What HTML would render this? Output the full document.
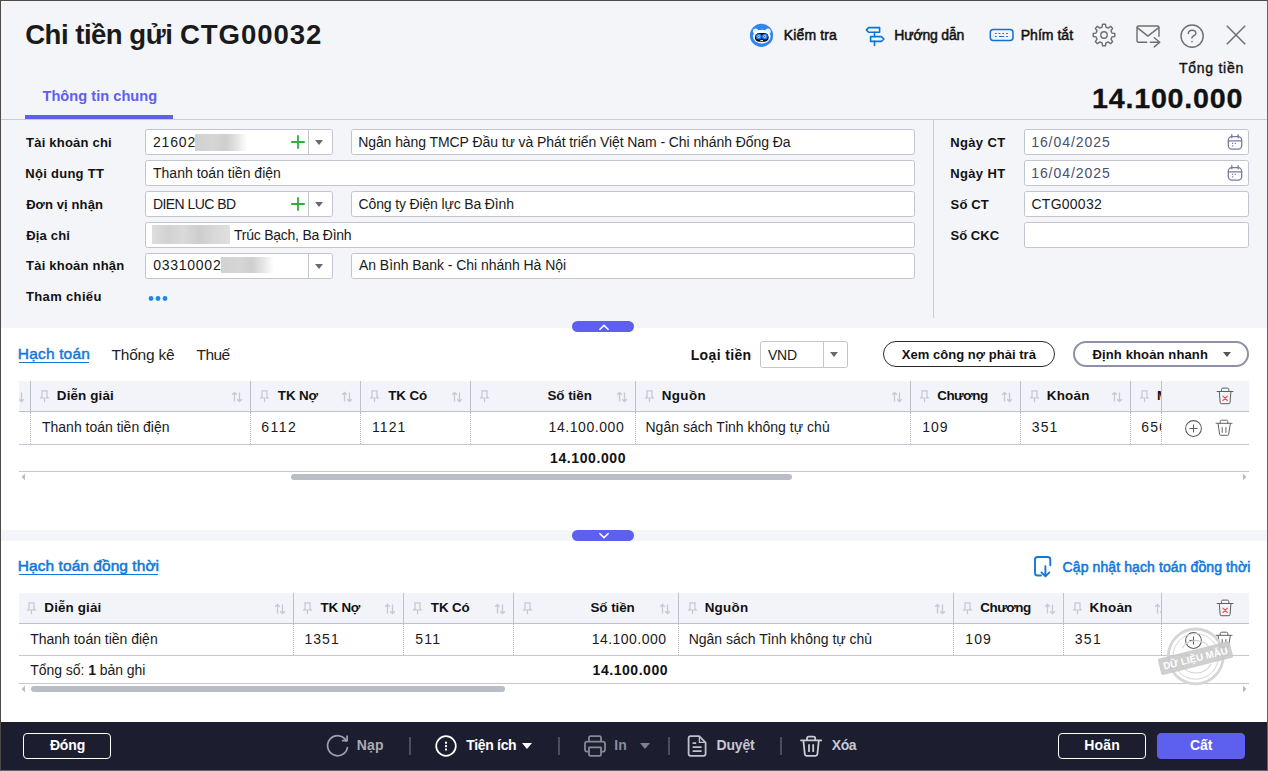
<!DOCTYPE html>
<html lang="vi">
<head>
<meta charset="utf-8">
<title>Chi tiền gửi CTG00032</title>
<style>
*{box-sizing:border-box;margin:0;padding:0}
html,body{width:1268px;height:771px;overflow:hidden}
body{position:relative;background:#f4f5f9;font-family:"Liberation Sans",sans-serif;font-size:14px;color:#111}
.a{position:absolute}
svg{position:absolute;overflow:visible}
.t{position:absolute;white-space:nowrap}
.frame{position:absolute;left:0;top:0;width:1268px;height:771px;border:1px solid;border-color:#4d4a48 #67635f #67635f #4d4a48;z-index:50}
.inp{position:absolute;border:1px solid #c2c5cf;border-radius:2.5px;background:#fff}
.sep{position:absolute;width:1px;background:#c4c7d0}
.arr{position:absolute;width:0;height:0;border-left:4.2px solid transparent;border-right:4.2px solid transparent;border-top:5.2px solid #6a6a6a}
.white{position:absolute;left:1px;width:1266px;background:#fff}
.pill{position:absolute;left:572px;width:62px;height:11px;border-radius:5.5px;background:#5d5fef}
.footer{position:absolute;left:1px;top:722px;width:1266px;height:48px;background:#1c1d2e}
.fbtn{position:absolute;top:733px;height:26px;border-radius:4px;border:1px solid #fff}
.fsep{position:absolute;top:737px;width:2px;height:18px;background:#4b4d60;margin-left:-1px}
.th{position:absolute;background:#f3f4f9}
.vs{position:absolute;width:1px;background:#bfc2cc}
.vd{position:absolute;width:0;border-left:1px dotted #b5b7c2}
.hl{position:absolute;height:1px;background:#c6c8d1}
</style>
</head>
<body>
<h1 style="font-size:inherit;font-weight:inherit">
<div class="t" style="left:25.20px;top:18px;font-size:27.6px;line-height:34px;color:#1a1a1a;font-weight:bold;letter-spacing:-0.52px;">Chi tiền gửi</div>
<div class="t" style="left:179.90px;top:18px;font-size:27.6px;line-height:34px;color:#1a1a1a;font-weight:bold;letter-spacing:0.93px;">CTG00032</div>
</h1>
<div class="t" style="left:42.45px;top:86px;font-size:14.6px;line-height:20px;color:#5d5fef;font-weight:bold;letter-spacing:0.03px;">Thông tin chung</div>
<div class="a" style="left:25px;top:115px;width:148px;height:4px;background:#5d5fef"></div>
<div class="a" style="left:1px;top:119px;width:1266px;height:1px;background:#c9ccd6"></div>
<svg style="left:749px;top:23px" width="25" height="25" viewBox="0 0 25 25"><circle cx="12.5" cy="12.4" r="11.6" fill="#3284ee"/><circle cx="6.6" cy="8.3" r="2.7" fill="#e8f1fd"/><circle cx="19" cy="8.3" r="2.7" fill="#e8f1fd"/><ellipse cx="12.75" cy="13.6" rx="8.8" ry="6.9" fill="#fff"/><rect x="5.9" y="10" width="13.8" height="8.8" rx="4.4" fill="#0a0a14"/><circle cx="9.8" cy="13.6" r="2.9" fill="#1a84f5"/><circle cx="15.8" cy="13.6" r="2.9" fill="#1a84f5"/><circle cx="9.8" cy="13.6" r="1.3" fill="#e8efff"/><circle cx="15.8" cy="13.6" r="1.3" fill="#e8efff"/><circle cx="9.8" cy="13.6" r="0.7" fill="#223"/><circle cx="15.8" cy="13.6" r="0.7" fill="#223"/><rect x="11.4" y="16.9" width="2.6" height="1" fill="#fff"/></svg>
<div class="t" style="left:783.78px;top:26px;font-size:14px;line-height:18px;color:#111;letter-spacing:0.13px;-webkit-text-stroke:0.5px #111;">Kiểm tra</div>
<svg style="left:864px;top:25px" width="22" height="22" viewBox="0 0 22 22" fill="none" stroke="#0b73d9" stroke-width="1.6" stroke-linejoin="round" stroke-linecap="round"><path d="M2.4 4.9L4.6 2.6H15.6V7.3H4.6Z"/><path d="M10.5 7.3V11.5M10.5 16.4V20.5"/><path d="M6.6 11.6H17.4L19.9 14L17.4 16.4H6.6Z"/></svg>
<div class="t" style="left:894.28px;top:26px;font-size:14px;line-height:18px;color:#111;letter-spacing:-0.17px;-webkit-text-stroke:0.5px #111;">Hướng dẫn</div>
<svg style="left:988px;top:27px" width="28" height="16" viewBox="0 0 28 16" fill="none" stroke="#0b73d9"><rect x="2.3" y="2.5" width="22.7" height="11" rx="3" stroke-width="1.5"/><path d="M6.9 6.5h1.8M10.6 6.5h1.8M14.3 6.5h1.8M18.1 6.5h1.8M6.9 9.5h1.8M11 9.5h5.2M18.1 9.5h1.8" stroke-width="1"/></svg>
<div class="t" style="left:1020.68px;top:26px;font-size:14px;line-height:18px;color:#111;letter-spacing:0.04px;-webkit-text-stroke:0.5px #111;">Phím tắt</div>
<svg style="left:1092px;top:23px" width="24" height="24" viewBox="0 0 24 24" fill="none" stroke="#6e6e6e" stroke-width="1.4" stroke-linejoin="round"><path d="M10.09 4.03 L10.55 1.20 L13.45 1.20 L13.91 4.03 L16.28 5.01 L18.61 3.34 L20.66 5.39 L18.99 7.72 L19.97 10.09 L22.80 10.55 L22.80 13.45 L19.97 13.91 L18.99 16.28 L20.66 18.61 L18.61 20.66 L16.28 18.99 L13.91 19.97 L13.45 22.80 L10.55 22.80 L10.09 19.97 L7.72 18.99 L5.39 20.66 L3.34 18.61 L5.01 16.28 L4.03 13.91 L1.20 13.45 L1.20 10.55 L4.03 10.09 L5.01 7.72 L3.34 5.39 L5.39 3.34 L7.72 5.01Z"/><circle cx="12" cy="12" r="3.2"/></svg>
<svg style="left:1134px;top:23px" width="28" height="26" viewBox="0 0 28 26" fill="none" stroke="#6e6e6e" stroke-width="1.4" stroke-linecap="round" stroke-linejoin="round"><path d="M12.8 19.3H4.5Q3 19.3 3 17.8V4.5Q3 3 4.5 3H23.5Q25 3 25 4.5V13.3"/><path d="M3.3 4.6L13.9 13.1L24.7 4.6"/><path d="M16.4 19.3H25.6M20.3 14.7L25.8 19.3L20.3 23.9"/></svg>
<svg style="left:1180px;top:24px" width="24" height="24" viewBox="0 0 24 24" fill="none" stroke="#6e6e6e" stroke-width="1.4" stroke-linecap="round"><circle cx="12.1" cy="12.1" r="11.1"/><path d="M8.3 9.6C8.3 7.4 9.9 6.3 12 6.3C14.2 6.3 15.9 7.5 15.9 9.4C15.9 11.8 12 11.6 11.9 14"/><circle cx="12" cy="17.6" r="0.8" fill="#6e6e6e" stroke="none"/></svg>
<svg style="left:1224px;top:23px" width="24" height="24" viewBox="0 0 24 24" fill="none" stroke="#6e6e6e" stroke-width="1.5"><path d="M2.8 2.8L21.2 21.2M21.2 2.8L2.8 21.2"/></svg>
<div class="t" style="left:1179.12px;top:59px;font-size:14px;line-height:18px;color:#111;letter-spacing:0.71px;-webkit-text-stroke:0.35px #111;">Tổng tiền</div>
<div class="t" style="left:1092.18px;top:82px;font-size:26.8px;line-height:34px;color:#111;font-weight:bold;letter-spacing:0.72px;-webkit-text-stroke:0.3px #111;transform:scaleX(1.07);transform-origin:0 0;">14.100.000</div>
<div class="t" style="left:26.07px;top:134px;font-size:13px;line-height:18px;color:#111;font-weight:bold;letter-spacing:0.21px;">Tài khoản chi</div>
<div class="t" style="left:25.36px;top:165px;font-size:13px;line-height:18px;color:#111;font-weight:bold;letter-spacing:0.27px;">Nội dung TT</div>
<div class="t" style="left:26.13px;top:196px;font-size:13px;line-height:18px;color:#111;font-weight:bold;letter-spacing:0.11px;">Đơn vị nhận</div>
<div class="t" style="left:26.13px;top:227px;font-size:13px;line-height:18px;color:#111;font-weight:bold;letter-spacing:0.19px;">Địa chỉ</div>
<div class="t" style="left:26.07px;top:257px;font-size:13px;line-height:18px;color:#111;font-weight:bold;letter-spacing:0.22px;">Tài khoản nhận</div>
<div class="t" style="left:26.07px;top:288px;font-size:13px;line-height:18px;color:#111;font-weight:bold;letter-spacing:0.34px;">Tham chiếu</div>
<div class="inp" style="left:145px;top:129px;width:188px;height:26px"></div>
<div class="sep" style="left:308px;top:130px;height:24px"></div>
<div class="arr" style="left:315.3px;top:140px"></div>
<svg style="left:289.7px;top:134px" width="16" height="16" viewBox="0 0 16 16"><path d="M8 1.2v13.6M1.2 8h13.6" stroke="#2eae3c" stroke-width="1.8" fill="none"/></svg>
<div class="inp" style="left:351px;top:129px;width:564px;height:26px"></div>
<div class="inp" style="left:145px;top:160px;width:770px;height:26px"></div>
<div class="inp" style="left:145px;top:191px;width:188px;height:26px"></div>
<div class="sep" style="left:308px;top:192px;height:24px"></div>
<div class="arr" style="left:315.3px;top:202px"></div>
<svg style="left:289.7px;top:196px" width="16" height="16" viewBox="0 0 16 16"><path d="M8 1.2v13.6M1.2 8h13.6" stroke="#2eae3c" stroke-width="1.8" fill="none"/></svg>
<div class="inp" style="left:351px;top:191px;width:564px;height:26px"></div>
<div class="inp" style="left:145px;top:222px;width:770px;height:26px"></div>
<div class="inp" style="left:145px;top:253px;width:188px;height:26px"></div>
<div class="sep" style="left:308px;top:254px;height:24px"></div>
<div class="arr" style="left:315.3px;top:264px"></div>
<div class="inp" style="left:351px;top:253px;width:564px;height:26px"></div>
<div class="t" style="left:153.00px;top:133px;font-size:14px;line-height:18px;color:#1a1a1a;letter-spacing:0.82px;">21602</div>
<div class="t" style="left:358.18px;top:133px;font-size:14px;line-height:18px;color:#1a1a1a;letter-spacing:-0.08px;">Ngân hàng TMCP Đầu tư và Phát triển Việt Nam - Chi nhánh Đống Đa</div>
<div class="t" style="left:153.02px;top:164px;font-size:14px;line-height:18px;color:#1a1a1a;letter-spacing:0.01px;">Thanh toán tiền điện</div>
<div class="t" style="left:152.88px;top:195px;font-size:14px;line-height:18px;color:#1a1a1a;letter-spacing:-0.54px;">DIEN LUC BD</div>
<div class="t" style="left:358.60px;top:195px;font-size:14px;line-height:18px;color:#1a1a1a;letter-spacing:-0.15px;">Công ty Điện lực Ba Đình</div>
<div class="t" style="left:233.92px;top:226px;font-size:14px;line-height:18px;color:#1a1a1a;letter-spacing:-0.23px;">Trúc Bạch, Ba Đình</div>
<div class="t" style="left:153.14px;top:256px;font-size:14px;line-height:18px;color:#1a1a1a;letter-spacing:0.75px;">03310002</div>
<div class="t" style="left:359.00px;top:256px;font-size:14px;line-height:18px;color:#1a1a1a;letter-spacing:-0.05px;">An Bình Bank - Chi nhánh Hà Nội</div>
<div class="a" style="left:195px;top:134px;width:52px;height:17px;background:linear-gradient(90deg,#d0d0d0 0,#d6d6d6 35%,#cfcfcf 60%,#e6e6e6 82%,#fff 100%)"></div>
<div class="a" style="left:152px;top:225px;width:78px;height:18.5px;background:linear-gradient(90deg,#dedede 0,#d2d2d2 20%,#dadada 40%,#cdcdcd 60%,#d8d8d8 80%,#e0e0e0 100%)"></div>
<div class="a" style="left:220.5px;top:256.5px;width:53px;height:16px;background:linear-gradient(90deg,#d2d2d2 0,#d6d6d6 35%,#cfcfcf 58%,#e6e6e6 80%,#fff 100%)"></div>
<svg style="left:148px;top:295px" width="20" height="7" viewBox="0 0 20 7"><circle cx="3" cy="3.5" r="2.4" fill="#1e88e5"/><circle cx="10" cy="3.5" r="2.4" fill="#1e88e5"/><circle cx="17" cy="3.5" r="2.4" fill="#1e88e5"/></svg>
<div class="a" style="left:933px;top:120px;width:1px;height:198px;background:#c9ccd6"></div>
<div class="t" style="left:950.15px;top:134px;font-size:13px;line-height:18px;color:#111;font-weight:bold;letter-spacing:0.38px;">Ngày CT</div>
<div class="t" style="left:950.15px;top:165px;font-size:13px;line-height:18px;color:#111;font-weight:bold;letter-spacing:0.38px;">Ngày HT</div>
<div class="t" style="left:950.61px;top:196px;font-size:13px;line-height:18px;color:#111;font-weight:bold;letter-spacing:0.11px;">Số CT</div>
<div class="t" style="left:950.61px;top:227px;font-size:13px;line-height:18px;color:#111;font-weight:bold;letter-spacing:0.01px;">Số CKC</div>
<div class="inp" style="left:1024px;top:129px;width:225px;height:26px"></div>
<div class="inp" style="left:1024px;top:160px;width:225px;height:26px"></div>
<div class="inp" style="left:1024px;top:191px;width:225px;height:26px"></div>
<div class="inp" style="left:1024px;top:222px;width:225px;height:26px"></div>
<div class="t" style="left:1031.15px;top:133px;font-size:14px;line-height:18px;color:#4a4e70;letter-spacing:0.95px;">16/04/2025</div>
<div class="t" style="left:1031.15px;top:164px;font-size:14px;line-height:18px;color:#4a4e70;letter-spacing:0.95px;">16/04/2025</div>
<div class="t" style="left:1031.50px;top:195px;font-size:14px;line-height:18px;color:#1a1a1a;letter-spacing:0.25px;">CTG00032</div>
<svg style="left:1227px;top:134px" width="16" height="16" viewBox="0 0 16 16" fill="none" stroke="#777b9f" stroke-width="1.3" stroke-linecap="round"><rect x="1.3" y="2.6" width="13.4" height="12.6" rx="3.6"/><path d="M1.5 6.8h13M4.8 0.6v3.2M11.2 0.6v3.2"/><path d="M5 9.4h1.2M7.7 9.4h1.2M5 11.9h1.2" stroke-linecap="butt"/></svg>
<svg style="left:1227px;top:165px" width="16" height="16" viewBox="0 0 16 16" fill="none" stroke="#777b9f" stroke-width="1.3" stroke-linecap="round"><rect x="1.3" y="2.6" width="13.4" height="12.6" rx="3.6"/><path d="M1.5 6.8h13M4.8 0.6v3.2M11.2 0.6v3.2"/><path d="M5 9.4h1.2M7.7 9.4h1.2M5 11.9h1.2" stroke-linecap="butt"/></svg>
<div class="white" style="top:328px;height:202px"></div>
<div class="white" style="top:541px;height:181px"></div>
<div class="pill" style="top:321px"></div><svg style="left:598px;top:322.6px" width="12" height="9" viewBox="0 0 12 9"><path d="M1.4 6.8L6 2.4L10.6 6.8" fill="none" stroke="#fff" stroke-width="1.5"/></svg>
<div class="pill" style="top:530px"></div><svg style="left:598px;top:531px" width="12" height="9" viewBox="0 0 12 9"><path d="M1.4 2.2L6 6.6L10.6 2.2" fill="none" stroke="#fff" stroke-width="1.5"/></svg>
<div class="t" style="left:17.86px;top:344px;font-size:15.5px;line-height:20px;color:#1278da;letter-spacing:0.16px;-webkit-text-stroke:0.45px #1278da;">Hạch toán</div>
<div class="a" style="left:19px;top:362px;width:70px;height:1px;background:#1278da"></div>
<div class="t" style="left:111.49px;top:345px;font-size:15.5px;line-height:20px;color:#222;letter-spacing:-0.20px;">Thống kê</div>
<div class="t" style="left:196.49px;top:345px;font-size:15.5px;line-height:20px;color:#222;letter-spacing:-0.53px;">Thuế</div>
<div class="t" style="left:690.69px;top:346px;font-size:14px;line-height:18px;color:#111;font-weight:bold;letter-spacing:0.36px;">Loại tiền</div>
<div class="inp" style="left:760px;top:341px;width:88px;height:27px"></div>
<div class="sep" style="left:823px;top:342px;height:25px"></div>
<div class="arr" style="left:830.3px;top:352px"></div>
<div class="t" style="left:767.93px;top:346px;font-size:14px;line-height:18px;color:#1a1a1a;letter-spacing:-0.17px;">VND</div>
<div class="a" style="left:883px;top:341px;width:172px;height:26px;border:1px solid #2a2a2a;border-radius:13px;background:#fff"></div>
<div class="t" style="left:901.87px;top:346px;font-size:13px;line-height:18px;color:#111;font-weight:bold;letter-spacing:0.03px;">Xem công nợ phải trả</div>
<div class="a" style="left:1073px;top:341px;width:176px;height:26px;border:2px solid #8d91a8;border-radius:13px;background:#fff"></div>
<div class="t" style="left:1092.53px;top:346px;font-size:13px;line-height:18px;color:#111;font-weight:bold;letter-spacing:0.13px;">Định khoản nhanh</div>
<div class="arr" style="left:1222.6px;top:352px;border-top-color:#555;border-left-width:4.8px;border-right-width:4.8px;border-top-width:5.6px"></div>
<div class="th" style="left:19px;top:381px;width:1230px;height:30px"></div>
<div class="hl" style="left:19px;top:411px;width:1230px;background:#bfc2cc"></div>
<div class="hl" style="left:19px;top:444px;width:1230px"></div>
<div class="vs" style="left:30px;top:381px;height:30px"></div>
<div class="vd" style="left:30px;top:412px;height:32px"></div>
<svg style="left:39.8px;top:390px" width="9" height="13" viewBox="0 0 9 13" fill="none" stroke="#c4c7cf" stroke-width="1.2"><path d="M2 0.8h5v5.9l1.2 1.3H0.8l1.2-1.3zM4.5 8v4.3"/></svg>
<div class="t" style="left:56.83px;top:387px;font-size:13.4px;line-height:18px;color:#111;font-weight:bold;letter-spacing:0.13px;">Diễn giải</div>
<div class="t" style="left:42.02px;top:418px;font-size:14px;line-height:18px;color:#1a1a1a;letter-spacing:-0.01px;">Thanh toán tiền điện</div>
<svg style="left:230.5px;top:391px" width="12" height="12" viewBox="0 0 12 12" fill="none" stroke="#c6c9d1" stroke-width="1.3"><path d="M3.5 10.5v-9M1.2 3.8L3.5 1.5L5.8 3.8M8.5 1.5v9M6.2 8.2L8.5 10.5L10.8 8.2"/></svg>
<div class="vs" style="left:250px;top:381px;height:30px"></div>
<div class="vd" style="left:250px;top:412px;height:32px"></div>
<svg style="left:259.8px;top:390px" width="9" height="13" viewBox="0 0 9 13" fill="none" stroke="#c4c7cf" stroke-width="1.2"><path d="M2 0.8h5v5.9l1.2 1.3H0.8l1.2-1.3zM4.5 8v4.3"/></svg>
<div class="t" style="left:277.87px;top:387px;font-size:13.4px;line-height:18px;color:#111;font-weight:bold;letter-spacing:-0.12px;">TK Nợ</div>
<div class="t" style="left:261.30px;top:418px;font-size:14px;line-height:18px;color:#1a1a1a;letter-spacing:1.50px;">6112</div>
<svg style="left:340.5px;top:391px" width="12" height="12" viewBox="0 0 12 12" fill="none" stroke="#c6c9d1" stroke-width="1.3"><path d="M3.5 10.5v-9M1.2 3.8L3.5 1.5L5.8 3.8M8.5 1.5v9M6.2 8.2L8.5 10.5L10.8 8.2"/></svg>
<div class="vs" style="left:360px;top:381px;height:30px"></div>
<div class="vd" style="left:360px;top:412px;height:32px"></div>
<svg style="left:369.8px;top:390px" width="9" height="13" viewBox="0 0 9 13" fill="none" stroke="#c4c7cf" stroke-width="1.2"><path d="M2 0.8h5v5.9l1.2 1.3H0.8l1.2-1.3zM4.5 8v4.3"/></svg>
<div class="t" style="left:388.17px;top:387px;font-size:13.4px;line-height:18px;color:#111;font-weight:bold;letter-spacing:-0.07px;">TK Có</div>
<div class="t" style="left:371.95px;top:418px;font-size:14px;line-height:18px;color:#1a1a1a;letter-spacing:1.09px;">1121</div>
<svg style="left:450.5px;top:391px" width="12" height="12" viewBox="0 0 12 12" fill="none" stroke="#c6c9d1" stroke-width="1.3"><path d="M3.5 10.5v-9M1.2 3.8L3.5 1.5L5.8 3.8M8.5 1.5v9M6.2 8.2L8.5 10.5L10.8 8.2"/></svg>
<div class="vs" style="left:470px;top:381px;height:30px"></div>
<div class="vd" style="left:470px;top:412px;height:32px"></div>
<svg style="left:479.8px;top:390px" width="9" height="13" viewBox="0 0 9 13" fill="none" stroke="#c4c7cf" stroke-width="1.2"><path d="M2 0.8h5v5.9l1.2 1.3H0.8l1.2-1.3zM4.5 8v4.3"/></svg>
<div class="t" style="left:547.40px;top:387px;font-size:13.4px;line-height:18px;color:#111;font-weight:bold;letter-spacing:-0.03px;">Số tiền</div>
<div class="t" style="left:548.55px;top:418px;font-size:14px;line-height:18px;color:#1a1a1a;letter-spacing:0.57px;">14.100.000</div>
<svg style="left:615.5px;top:391px" width="12" height="12" viewBox="0 0 12 12" fill="none" stroke="#c6c9d1" stroke-width="1.3"><path d="M3.5 10.5v-9M1.2 3.8L3.5 1.5L5.8 3.8M8.5 1.5v9M6.2 8.2L8.5 10.5L10.8 8.2"/></svg>
<div class="vs" style="left:635px;top:381px;height:30px"></div>
<div class="vd" style="left:635px;top:412px;height:32px"></div>
<svg style="left:644.8px;top:390px" width="9" height="13" viewBox="0 0 9 13" fill="none" stroke="#c4c7cf" stroke-width="1.2"><path d="M2 0.8h5v5.9l1.2 1.3H0.8l1.2-1.3zM4.5 8v4.3"/></svg>
<div class="t" style="left:661.83px;top:387px;font-size:13.4px;line-height:18px;color:#111;font-weight:bold;letter-spacing:0.34px;">Nguồn</div>
<div class="t" style="left:645.48px;top:418px;font-size:14px;line-height:18px;color:#1a1a1a;letter-spacing:0.03px;">Ngân sách Tỉnh không tự chủ</div>
<svg style="left:890.5px;top:391px" width="12" height="12" viewBox="0 0 12 12" fill="none" stroke="#c6c9d1" stroke-width="1.3"><path d="M3.5 10.5v-9M1.2 3.8L3.5 1.5L5.8 3.8M8.5 1.5v9M6.2 8.2L8.5 10.5L10.8 8.2"/></svg>
<div class="vs" style="left:910px;top:381px;height:30px"></div>
<div class="vd" style="left:910px;top:412px;height:32px"></div>
<svg style="left:919.8px;top:390px" width="9" height="13" viewBox="0 0 9 13" fill="none" stroke="#c4c7cf" stroke-width="1.2"><path d="M2 0.8h5v5.9l1.2 1.3H0.8l1.2-1.3zM4.5 8v4.3"/></svg>
<div class="t" style="left:937.26px;top:387px;font-size:13.4px;line-height:18px;color:#111;font-weight:bold;letter-spacing:-0.49px;">Chương</div>
<div class="t" style="left:922.15px;top:418px;font-size:14px;line-height:18px;color:#1a1a1a;letter-spacing:1.08px;">109</div>
<svg style="left:1000.5px;top:391px" width="12" height="12" viewBox="0 0 12 12" fill="none" stroke="#c6c9d1" stroke-width="1.3"><path d="M3.5 10.5v-9M1.2 3.8L3.5 1.5L5.8 3.8M8.5 1.5v9M6.2 8.2L8.5 10.5L10.8 8.2"/></svg>
<div class="vs" style="left:1020px;top:381px;height:30px"></div>
<div class="vd" style="left:1020px;top:412px;height:32px"></div>
<svg style="left:1029.8px;top:390px" width="9" height="13" viewBox="0 0 9 13" fill="none" stroke="#c4c7cf" stroke-width="1.2"><path d="M2 0.8h5v5.9l1.2 1.3H0.8l1.2-1.3zM4.5 8v4.3"/></svg>
<div class="t" style="left:1046.73px;top:387px;font-size:13.4px;line-height:18px;color:#111;font-weight:bold;letter-spacing:0.25px;">Khoản</div>
<div class="t" style="left:1031.74px;top:418px;font-size:14px;line-height:18px;color:#1a1a1a;letter-spacing:1.14px;">351</div>
<svg style="left:1110.5px;top:391px" width="12" height="12" viewBox="0 0 12 12" fill="none" stroke="#c6c9d1" stroke-width="1.3"><path d="M3.5 10.5v-9M1.2 3.8L3.5 1.5L5.8 3.8M8.5 1.5v9M6.2 8.2L8.5 10.5L10.8 8.2"/></svg>
<div class="vs" style="left:1130px;top:381px;height:30px"></div>
<div class="vd" style="left:1130px;top:412px;height:32px"></div>
<svg style="left:1139.8px;top:390px" width="9" height="13" viewBox="0 0 9 13" fill="none" stroke="#c4c7cf" stroke-width="1.2"><path d="M2 0.8h5v5.9l1.2 1.3H0.8l1.2-1.3zM4.5 8v4.3"/></svg>
<div class="a" style="left:1131px;top:381px;width:30px;height:63px;overflow:hidden">
<div class="t" style="left:26.03px;top:6px;font-size:13.4px;line-height:18px;color:#111;font-weight:bold;">Mục</div>
<div class="t" style="left:10.20px;top:37px;font-size:14px;line-height:18px;color:#1a1a1a;letter-spacing:1.26px;">6501</div>
</div>
<div class="vs" style="left:1161px;top:381px;height:30px"></div>
<div class="vd" style="left:1161px;top:412px;height:32px"></div>
<div class="a" style="left:19px;top:381px;width:11px;height:30px;overflow:hidden"><svg style="left:-6.5px;top:10px" width="12" height="12" viewBox="0 0 12 12" fill="none" stroke="#c6c9d1" stroke-width="1.3"><path d="M3.5 10.5v-9M1.2 3.8L3.5 1.5L5.8 3.8M8.5 1.5v9M6.2 8.2L8.5 10.5L10.8 8.2"/></svg></div>
<div class="hl" style="left:19px;top:471px;width:1230px"></div>
<svg style="left:1216px;top:387px" width="18" height="18" viewBox="0 0 18 18" fill="none" stroke="#606060" stroke-width="1" stroke-linecap="round" stroke-linejoin="round"><path d="M1.1 4.5H17M5.5 4.4V2.5Q5.5 1.1 6.9 1.1H11.4Q12.8 1.1 12.8 2.5V4.4M3.3 5L4.2 15.8Q4.3 16.7 5.2 16.7H13Q13.9 16.7 14 15.8L14.9 5"/><path d="M6.9 9.1L11.3 13.5M11.3 9.1L6.9 13.5" stroke="#fb4a54" stroke-width="1.1"/></svg>
<svg style="left:1183.8px;top:418.5px" width="19" height="19" viewBox="0 0 19 19" fill="none" stroke="#5e5e5e" stroke-width="1.05"><circle cx="9.5" cy="9.5" r="7.9"/><path d="M9.5 5.4V13.6M5.4 9.5H13.6"/></svg>
<svg style="left:1215px;top:419px" width="18" height="18" viewBox="0 0 18 18" fill="none" stroke="#636363" stroke-width="1" stroke-linecap="round" stroke-linejoin="round"><path d="M1.1 4.3H17M5.2 4.2V2.6Q5.2 1.2 6.6 1.2H11.4Q12.8 1.2 12.8 2.6V4.2M3.1 4.8L4.6 15.4Q4.7 16.3 5.6 16.3H12.6Q13.5 16.3 13.6 15.4L15.3 4.8M7.2 8.5V13.4M10.9 8.5V13.4"/></svg>
<div class="t" style="left:550.06px;top:449px;font-size:14px;line-height:18px;color:#111;font-weight:bold;letter-spacing:0.59px;">14.100.000</div>
<div class="a" style="left:291px;top:474px;width:501px;height:6px;border-radius:3px;background:#b9bdc6"></div>
<svg style="left:20px;top:473px" width="6" height="8" viewBox="0 0 6 8"><path d="M5 0.5L1.5 4L5 7.5z" fill="#b9bdc6"/></svg>
<svg style="left:1242px;top:473px" width="6" height="8" viewBox="0 0 6 8"><path d="M1 0.5L4.5 4L1 7.5z" fill="#b9bdc6"/></svg>
<div class="t" style="left:17.86px;top:556px;font-size:15.5px;line-height:20px;color:#1278da;letter-spacing:0.05px;-webkit-text-stroke:0.55px #1278da;">Hạch toán đồng thời</div>
<div class="a" style="left:19px;top:574px;width:139px;height:1px;background:#1278da"></div>
<svg style="left:1033.2px;top:555px" width="22" height="24" viewBox="0 0 22 24" fill="none" stroke="#1278da" stroke-width="1.9" stroke-linecap="round" stroke-linejoin="round"><path d="M8 20.5H4.6Q2 20.5 2 17.9V4.6Q2 2 4.6 2H14.7Q17.3 2 17.3 4.6V10.3"/><path d="M12.4 11.2V21M8.4 17.4L12.4 21.4L16.4 17.4"/></svg>
<div class="t" style="left:1062.60px;top:558px;font-size:14px;line-height:18px;color:#1278da;letter-spacing:0.10px;-webkit-text-stroke:0.55px #1278da;">Cập nhật hạch toán đồng thời</div>
<div class="th" style="left:19px;top:593px;width:1230px;height:30px"></div>
<div class="hl" style="left:19px;top:623px;width:1230px;background:#bfc2cc"></div>
<div class="hl" style="left:19px;top:655px;width:1230px"></div>
<svg style="left:26.5px;top:602px" width="9" height="13" viewBox="0 0 9 13" fill="none" stroke="#c4c7cf" stroke-width="1.2"><path d="M2 0.8h5v5.9l1.2 1.3H0.8l1.2-1.3zM4.5 8v4.3"/></svg>
<div class="t" style="left:44.33px;top:599px;font-size:13.4px;line-height:18px;color:#111;font-weight:bold;letter-spacing:0.13px;">Diễn giải</div>
<div class="t" style="left:30.22px;top:630px;font-size:14px;line-height:18px;color:#1a1a1a;letter-spacing:-0.01px;">Thanh toán tiền điện</div>
<svg style="left:273.5px;top:603px" width="12" height="12" viewBox="0 0 12 12" fill="none" stroke="#c6c9d1" stroke-width="1.3"><path d="M3.5 10.5v-9M1.2 3.8L3.5 1.5L5.8 3.8M8.5 1.5v9M6.2 8.2L8.5 10.5L10.8 8.2"/></svg>
<div class="vs" style="left:293px;top:593px;height:30px"></div>
<div class="vd" style="left:293px;top:624px;height:31px"></div>
<svg style="left:302.8px;top:602px" width="9" height="13" viewBox="0 0 9 13" fill="none" stroke="#c4c7cf" stroke-width="1.2"><path d="M2 0.8h5v5.9l1.2 1.3H0.8l1.2-1.3zM4.5 8v4.3"/></svg>
<div class="t" style="left:320.47px;top:599px;font-size:13.4px;line-height:18px;color:#111;font-weight:bold;letter-spacing:-0.22px;">TK Nợ</div>
<div class="t" style="left:304.45px;top:630px;font-size:14px;line-height:18px;color:#1a1a1a;letter-spacing:1.04px;">1351</div>
<svg style="left:383.5px;top:603px" width="12" height="12" viewBox="0 0 12 12" fill="none" stroke="#c6c9d1" stroke-width="1.3"><path d="M3.5 10.5v-9M1.2 3.8L3.5 1.5L5.8 3.8M8.5 1.5v9M6.2 8.2L8.5 10.5L10.8 8.2"/></svg>
<div class="vs" style="left:403px;top:593px;height:30px"></div>
<div class="vd" style="left:403px;top:624px;height:31px"></div>
<svg style="left:412.8px;top:602px" width="9" height="13" viewBox="0 0 9 13" fill="none" stroke="#c4c7cf" stroke-width="1.2"><path d="M2 0.8h5v5.9l1.2 1.3H0.8l1.2-1.3zM4.5 8v4.3"/></svg>
<div class="t" style="left:430.87px;top:599px;font-size:13.4px;line-height:18px;color:#111;font-weight:bold;letter-spacing:-0.12px;">TK Có</div>
<div class="t" style="left:415.24px;top:630px;font-size:14px;line-height:18px;color:#1a1a1a;letter-spacing:1.18px;">511</div>
<svg style="left:493.5px;top:603px" width="12" height="12" viewBox="0 0 12 12" fill="none" stroke="#c6c9d1" stroke-width="1.3"><path d="M3.5 10.5v-9M1.2 3.8L3.5 1.5L5.8 3.8M8.5 1.5v9M6.2 8.2L8.5 10.5L10.8 8.2"/></svg>
<div class="vs" style="left:513px;top:593px;height:30px"></div>
<div class="vd" style="left:513px;top:624px;height:31px"></div>
<svg style="left:522.8px;top:602px" width="9" height="13" viewBox="0 0 9 13" fill="none" stroke="#c4c7cf" stroke-width="1.2"><path d="M2 0.8h5v5.9l1.2 1.3H0.8l1.2-1.3zM4.5 8v4.3"/></svg>
<div class="t" style="left:590.50px;top:599px;font-size:13.4px;line-height:18px;color:#111;font-weight:bold;letter-spacing:-0.06px;">Số tiền</div>
<div class="t" style="left:591.75px;top:630px;font-size:14px;line-height:18px;color:#1a1a1a;letter-spacing:0.46px;">14.100.000</div>
<svg style="left:658.5px;top:603px" width="12" height="12" viewBox="0 0 12 12" fill="none" stroke="#c6c9d1" stroke-width="1.3"><path d="M3.5 10.5v-9M1.2 3.8L3.5 1.5L5.8 3.8M8.5 1.5v9M6.2 8.2L8.5 10.5L10.8 8.2"/></svg>
<div class="vs" style="left:678px;top:593px;height:30px"></div>
<div class="vd" style="left:678px;top:624px;height:31px"></div>
<svg style="left:687.8px;top:602px" width="9" height="13" viewBox="0 0 9 13" fill="none" stroke="#c4c7cf" stroke-width="1.2"><path d="M2 0.8h5v5.9l1.2 1.3H0.8l1.2-1.3zM4.5 8v4.3"/></svg>
<div class="t" style="left:704.63px;top:599px;font-size:13.4px;line-height:18px;color:#111;font-weight:bold;letter-spacing:0.27px;">Nguồn</div>
<div class="t" style="left:688.68px;top:630px;font-size:14px;line-height:18px;color:#1a1a1a;">Ngân sách Tỉnh không tự chủ</div>
<svg style="left:933.5px;top:603px" width="12" height="12" viewBox="0 0 12 12" fill="none" stroke="#c6c9d1" stroke-width="1.3"><path d="M3.5 10.5v-9M1.2 3.8L3.5 1.5L5.8 3.8M8.5 1.5v9M6.2 8.2L8.5 10.5L10.8 8.2"/></svg>
<div class="vs" style="left:953px;top:593px;height:30px"></div>
<div class="vd" style="left:953px;top:624px;height:31px"></div>
<svg style="left:962.8px;top:602px" width="9" height="13" viewBox="0 0 9 13" fill="none" stroke="#c4c7cf" stroke-width="1.2"><path d="M2 0.8h5v5.9l1.2 1.3H0.8l1.2-1.3zM4.5 8v4.3"/></svg>
<div class="t" style="left:980.36px;top:599px;font-size:13.4px;line-height:18px;color:#111;font-weight:bold;letter-spacing:-0.53px;">Chương</div>
<div class="t" style="left:965.25px;top:630px;font-size:14px;line-height:18px;color:#1a1a1a;letter-spacing:1.14px;">109</div>
<svg style="left:1043.5px;top:603px" width="12" height="12" viewBox="0 0 12 12" fill="none" stroke="#c6c9d1" stroke-width="1.3"><path d="M3.5 10.5v-9M1.2 3.8L3.5 1.5L5.8 3.8M8.5 1.5v9M6.2 8.2L8.5 10.5L10.8 8.2"/></svg>
<div class="vs" style="left:1063px;top:593px;height:30px"></div>
<div class="vd" style="left:1063px;top:624px;height:31px"></div>
<svg style="left:1072.8px;top:602px" width="9" height="13" viewBox="0 0 9 13" fill="none" stroke="#c4c7cf" stroke-width="1.2"><path d="M2 0.8h5v5.9l1.2 1.3H0.8l1.2-1.3zM4.5 8v4.3"/></svg>
<div class="t" style="left:1089.53px;top:599px;font-size:13.4px;line-height:18px;color:#111;font-weight:bold;letter-spacing:0.28px;">Khoản</div>
<div class="t" style="left:1074.74px;top:630px;font-size:14px;line-height:18px;color:#1a1a1a;letter-spacing:1.29px;">351</div>
<div class="a" style="left:1153.5px;top:593px;width:7.5px;height:30px;overflow:hidden"><svg style="left:0px;top:10px" width="12" height="12" viewBox="0 0 12 12" fill="none" stroke="#c6c9d1" stroke-width="1.3"><path d="M3.5 10.5v-9M1.2 3.8L3.5 1.5L5.8 3.8M8.5 1.5v9M6.2 8.2L8.5 10.5L10.8 8.2"/></svg></div>
<div class="vs" style="left:1161px;top:593px;height:30px"></div>
<div class="vd" style="left:1161px;top:624px;height:31px"></div>
<div class="hl" style="left:19px;top:683px;width:1230px"></div>
<svg style="left:1216px;top:599px" width="18" height="18" viewBox="0 0 18 18" fill="none" stroke="#606060" stroke-width="1" stroke-linecap="round" stroke-linejoin="round"><path d="M1.1 4.5H17M5.5 4.4V2.5Q5.5 1.1 6.9 1.1H11.4Q12.8 1.1 12.8 2.5V4.4M3.3 5L4.2 15.8Q4.3 16.7 5.2 16.7H13Q13.9 16.7 14 15.8L14.9 5"/><path d="M6.9 9.1L11.3 13.5M11.3 9.1L6.9 13.5" stroke="#fb4a54" stroke-width="1.1"/></svg>
<svg style="left:1184px;top:630.5px" width="19" height="19" viewBox="0 0 19 19" fill="none" stroke="#5e5e5e" stroke-width="1.05"><circle cx="9.5" cy="9.5" r="7.9"/><path d="M9.5 5.4V13.6M5.4 9.5H13.6"/></svg>
<svg style="left:1215px;top:631px" width="18" height="18" viewBox="0 0 18 18" fill="none" stroke="#636363" stroke-width="1" stroke-linecap="round" stroke-linejoin="round"><path d="M1.1 4.3H17M5.2 4.2V2.6Q5.2 1.2 6.6 1.2H11.4Q12.8 1.2 12.8 2.6V4.2M3.1 4.8L4.6 15.4Q4.7 16.3 5.6 16.3H12.6Q13.5 16.3 13.6 15.4L15.3 4.8M7.2 8.5V13.4M10.9 8.5V13.4"/></svg>
<svg style="left:1156px;top:617px" width="80" height="80" viewBox="0 0 80 80"><g fill="none" stroke="#d6d6d6"><circle cx="39.7" cy="39.4" r="27.4" stroke-width="2.8"/><circle cx="39.7" cy="39.4" r="22.8" stroke-width="1"/><path d="M25 47A17 17 0 0 0 55 47M26 31A17 17 0 0 1 54 31" stroke-width="1.2"/></g><g transform="rotate(-14 39.5 41.2)"><rect x="2.5" y="32.7" width="74" height="17" rx="1.5" fill="#c8c8c8" fill-opacity="0.88"/><text x="39.5" y="44.7" text-anchor="middle" font-family="Liberation Sans, sans-serif" font-weight="bold" font-size="9.8" fill="#fff" letter-spacing="0.1">DỮ LIỆU MẪU</text></g></svg>
<div class="t" style="left:30.22px;top:661px;font-size:14px;line-height:18px;color:#1a1a1a;letter-spacing:-0.05px;">Tổng số: <b>1</b> bản ghi</div>
<div class="t" style="left:592.56px;top:661px;font-size:14px;line-height:18px;color:#111;font-weight:bold;letter-spacing:0.55px;">14.100.000</div>
<div class="a" style="left:31px;top:686px;width:474px;height:6px;border-radius:3px;background:#b9bdc6"></div>
<svg style="left:20px;top:685px" width="6" height="8" viewBox="0 0 6 8"><path d="M5 0.5L1.5 4L5 7.5z" fill="#b9bdc6"/></svg>
<svg style="left:1242px;top:685px" width="6" height="8" viewBox="0 0 6 8"><path d="M1 0.5L4.5 4L1 7.5z" fill="#b9bdc6"/></svg>
<div class="footer"></div>
<div class="fbtn" style="left:23px;width:88px"></div>
<div class="t" style="left:49.93px;top:736px;font-size:14px;line-height:18px;color:#fff;font-weight:bold;letter-spacing:-0.16px;">Đóng</div>
<svg style="left:325px;top:733px" width="26" height="26" viewBox="0 0 26 26" fill="none" stroke="#9d9fab" stroke-width="1.75" stroke-linecap="round" stroke-linejoin="round"><path d="M21.4 8A10 10 0 1 0 22.4 14.6"/><path d="M22.1 3.2V7.6H17.6"/></svg>
<div class="t" style="left:356.79px;top:736px;font-size:14px;line-height:18px;color:#a9abb5;font-weight:bold;letter-spacing:0.10px;">Nạp</div>
<div class="fsep" style="left:410px"></div>
<svg style="left:434px;top:734px" width="24" height="24" viewBox="0 0 24 24" fill="none" stroke="#fff" stroke-width="1.7"><circle cx="12" cy="12" r="9.8"/><g fill="#fff" stroke="none"><rect x="11" y="7.7" width="2" height="2"/><rect x="11" y="11.1" width="2" height="2"/><rect x="11" y="14.5" width="2" height="2"/></g></svg>
<div class="t" style="left:466.36px;top:736px;font-size:14px;line-height:18px;color:#fff;font-weight:bold;letter-spacing:-0.34px;">Tiện ích</div>
<div class="arr" style="left:522px;top:743px;border-top-color:#fff;border-left-width:5px;border-right-width:5px;border-top-width:6px"></div>
<div class="fsep" style="left:559px"></div>
<svg style="left:583px;top:734px" width="24" height="24" viewBox="0 0 24 24" fill="none" stroke="#868896" stroke-width="1.8" stroke-linejoin="round"><path d="M6 7.5V3.8Q6 2.2 7.6 2.2H16.4Q18 2.2 18 3.8V7.5"/><path d="M6 17.6H4.2Q2 17.6 2 15.4V9.8Q2 7.6 4.2 7.6H19.8Q22 7.6 22 9.8V15.4Q22 17.6 19.8 17.6H18"/><path d="M6 13.4H18V20.2Q18 21.8 16.4 21.8H7.6Q6 21.8 6 20.2Z"/></svg>
<div class="t" style="left:614.29px;top:736px;font-size:14px;line-height:18px;color:#8a8c98;font-weight:bold;">In</div>
<div class="arr" style="left:640px;top:743px;border-top-color:#7f818e;border-left-width:5px;border-right-width:5px;border-top-width:6px"></div>
<div class="fsep" style="left:669px"></div>
<svg style="left:686px;top:734px" width="22" height="24" viewBox="0 0 22 24" fill="none" stroke="#bfc0ca" stroke-width="1.8" stroke-linejoin="round" stroke-linecap="butt"><path d="M2.6 4.2Q2.6 2.2 4.6 2.2H13.2L19.6 8.6V19.8Q19.6 21.8 17.6 21.8H4.6Q2.6 21.8 2.6 19.8Z"/><path d="M13.4 2.6V8.4H19.2" stroke-width="1.4"/><path d="M6.6 9.2H10.2M6.6 13.2H15.6M6.6 17.2H15.6"/></svg>
<div class="t" style="left:716.59px;top:736px;font-size:14px;line-height:18px;color:#c6c7d0;font-weight:bold;letter-spacing:-0.20px;">Duyệt</div>
<div class="fsep" style="left:781px"></div>
<svg style="left:799px;top:734px" width="24" height="24" viewBox="0 0 24 24" fill="none" stroke="#cbccd4" stroke-width="1.8" stroke-linejoin="round" stroke-linecap="round"><path d="M2 6.4H22.2M8 6.2V4.4Q8 2.6 9.8 2.6H14.4Q16.2 2.6 16.2 4.4V6.2M4.4 6.6L5.8 20.2Q6 21.8 7.6 21.8H16.6Q18.2 21.8 18.4 20.2L19.8 6.6M10 11V17.2M14.2 11V17.2"/></svg>
<div class="t" style="left:831.86px;top:736px;font-size:14px;line-height:18px;color:#c6c7d0;font-weight:bold;letter-spacing:-0.49px;">Xóa</div>
<div class="fbtn" style="left:1058px;width:88px"></div>
<div class="t" style="left:1084.29px;top:736px;font-size:14px;line-height:18px;color:#fff;font-weight:bold;letter-spacing:0.18px;">Hoãn</div>
<div class="fbtn" style="left:1157px;width:88px;background:#5d5fef;border-color:#5d5fef"></div>
<div class="t" style="left:1189.94px;top:736px;font-size:14px;line-height:18px;color:#fff;font-weight:bold;letter-spacing:-0.02px;">Cất</div>
<div class="frame"></div>
</body>
</html>
